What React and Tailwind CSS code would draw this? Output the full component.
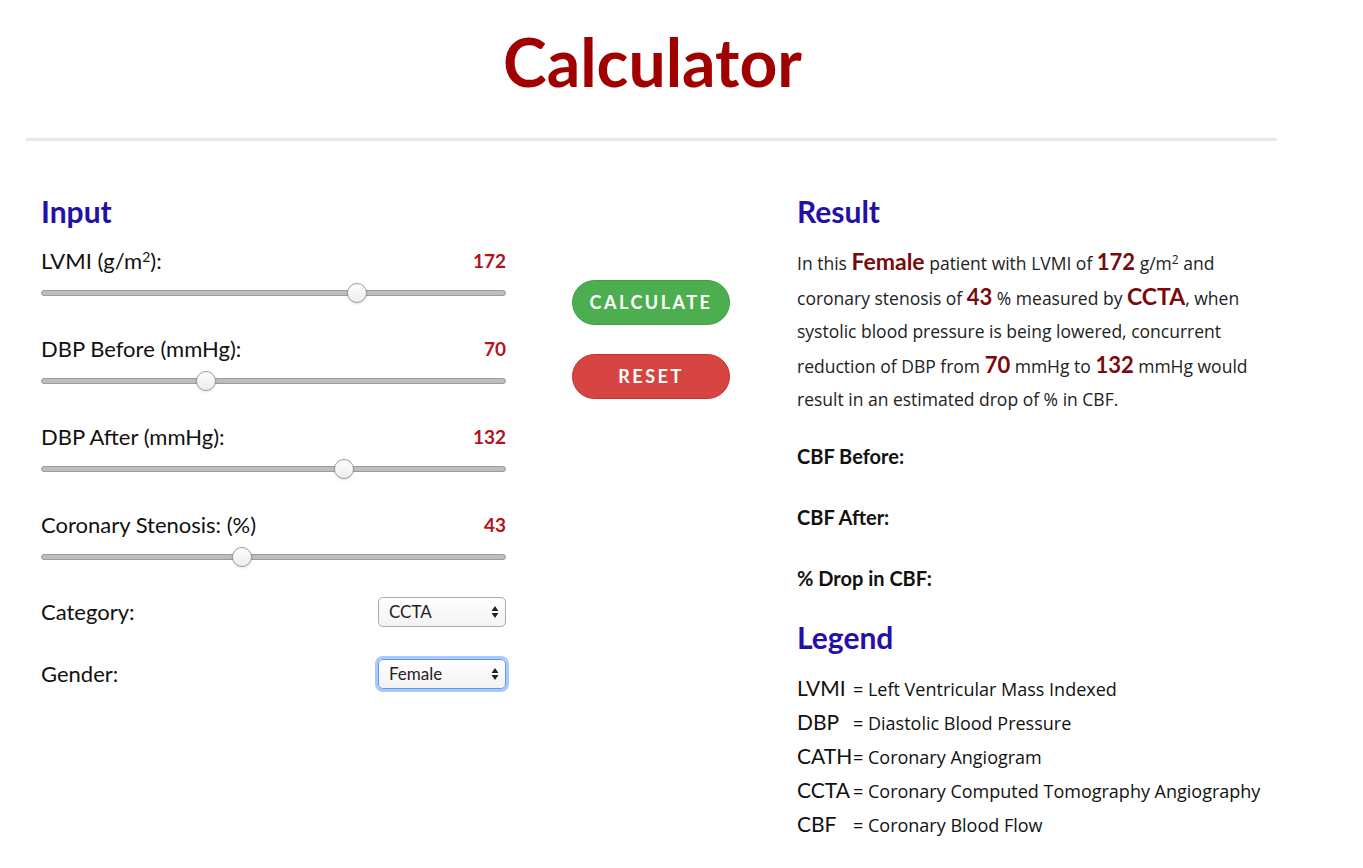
import React from "react";

const sliders = [
  { label: <>LVMI (g/m<sup className="text-[14px]">2</sup>):</>, value: "172", pct: 0.68 },
  { label: "DBP Before (mmHg):", value: "70", pct: 0.355 },
  { label: "DBP After (mmHg):", value: "132", pct: 0.652 },
  { label: "Coronary Stenosis: (%)", value: "43", pct: 0.432 },
];

function Slider({ pct }) {
  return (
    <div className="relative h-[20px] mt-[9px]">
      <div className="absolute left-0 right-0 top-[7px] h-[6px] rounded-full bg-[#bdbdbd] border border-[#9a9a9a]" />
      <div
        className="absolute top-0 w-[20px] h-[20px] rounded-full bg-gradient-to-b from-white to-[#ececec] border border-[#9b9b9b] shadow-sm"
        style={{ left: `calc(${pct * 100}% - 10px)` }}
      />
    </div>
  );
}

function Select({ value, focused }) {
  return (
    <div
      className={
        "w-[128px] h-[30px] rounded-[5px] bg-gradient-to-b from-white to-[#f3f3f3] flex items-center justify-between pl-[10px] pr-[6px] text-[17px] text-[#222] " +
        (focused
          ? "border border-[#5b9bf0] shadow-[0_0_0_3px_rgba(110,165,245,0.6)]"
          : "border border-[#a9a9a9]")
      }
    >
      <span>{value}</span>
      <svg width="8" height="14" viewBox="0 0 8 14">
        <path d="M4 1 L7.5 6 H0.5 Z" fill="#222" />
        <path d="M4 13 L7.5 8 H0.5 Z" fill="#222" />
      </svg>
    </div>
  );
}

const B = ({ children, size = "text-[23px]" }) => (
  <span className={"font-bold text-[#7a0a0a] " + size} style={{ fontFamily: "Lato, sans-serif" }}>
    {children}
  </span>
);

const legend = [
  ["LVMI", "Left Ventricular Mass Indexed"],
  ["DBP", "Diastolic Blood Pressure"],
  ["CATH", "Coronary Angiogram"],
  ["CCTA", "Coronary Computed Tomography Angiography"],
  ["CBF", "Coronary Blood Flow"],
];

export default function App() {
  return (
    <div className="w-[1363px] h-[868px] bg-white overflow-hidden" style={{ fontFamily: "Lato, 'Open Sans', sans-serif" }}>
      <div className="ml-[26px] w-[1251px]">
        <h1 className="text-center text-[66px] font-bold text-[#a00000] leading-none pt-[29px] pl-[2px]">
          Calculator
        </h1>
        <div className="mt-[43px] h-[3px] bg-[#e8e8e8]" />

        <div className="flex pt-[55px]">
          {/* Input column */}
          <div className="ml-[15px] w-[465px]">
            <h2 className="text-[30px] font-bold text-[#2310a6] leading-none">Input</h2>
            <div className="mt-[22px] flex flex-col gap-[33px]">
              {sliders.map((s, i) => (
                <div key={i}>
                  <div className="flex justify-between items-end text-[22px] text-[#111] leading-[26px]">
                    <span>{s.label}</span>
                    <span className="text-[19px] font-bold text-[#b3141b]">{s.value}</span>
                  </div>
                  <Slider pct={s.pct} />
                </div>
              ))}
            </div>
            <div className="mt-[28px] flex justify-between items-center text-[22px] text-[#111]">
              <span>Category:</span>
              <Select value="CCTA" />
            </div>
            <div className="mt-[29px] flex justify-between items-center text-[22px] text-[#111]">
              <span>Gender:</span>
              <Select value="Female" focused />
            </div>
          </div>

          {/* Buttons */}
          <div className="ml-[66px] w-[158px] pt-[84px] flex flex-col gap-[29px]">
            <button className="h-[45px] rounded-full bg-[#4cae4f] border border-[#43a047] text-white font-bold text-[18px] tracking-[2.5px]">
              CALCULATE
            </button>
            <button className="h-[45px] rounded-full bg-[#d64541] border border-[#c9302c] text-white font-bold text-[18px] tracking-[2.5px]">
              RESET
            </button>
          </div>

          {/* Result column */}
          <div className="ml-[67px] w-[480px]">
            <h2 className="text-[30px] font-bold text-[#2310a6] leading-none">Result</h2>
            <p
              className="mt-[19px] text-[17.5px] leading-[33px] text-[#222] whitespace-nowrap"
              style={{ fontFamily: "'Open Sans', sans-serif" }}
            >
              In this <B>Female</B> patient with LVMI of <B size="text-[22px]">172</B> g/m
              <sup className="text-[12px]">2</sup> and
              <br />
              coronary stenosis of <B size="text-[22px]">43</B> % measured by <B>CCTA</B>, when
              <br />
              systolic blood pressure is being lowered, concurrent
              <br />
              reduction of DBP from <B size="text-[22px]">70</B> mmHg to <B size="text-[22px]">132</B> mmHg would
              <br />
              result in an estimated drop of % in CBF.
            </p>
            <div className="mt-[28px] flex flex-col gap-[37px] text-[20px] font-bold text-[#111] leading-[24px]">
              <div>CBF Before:</div>
              <div>CBF After:</div>
              <div>% Drop in CBF:</div>
            </div>
            <h2 className="mt-[32px] text-[30px] font-bold text-[#2310a6] leading-none">Legend</h2>
            <div className="mt-[20px] flex flex-col">
              {legend.map(([a, d]) => (
                <div key={a} className="flex items-baseline h-[34px] text-[#111]">
                  <span className="w-[56px] text-[21px]">{a}</span>
                  <span className="text-[18px]" style={{ fontFamily: "'Open Sans', sans-serif" }}>
                    = {d}
                  </span>
                </div>
              ))}
            </div>
          </div>
        </div>
      </div>
    </div>
  );
}
